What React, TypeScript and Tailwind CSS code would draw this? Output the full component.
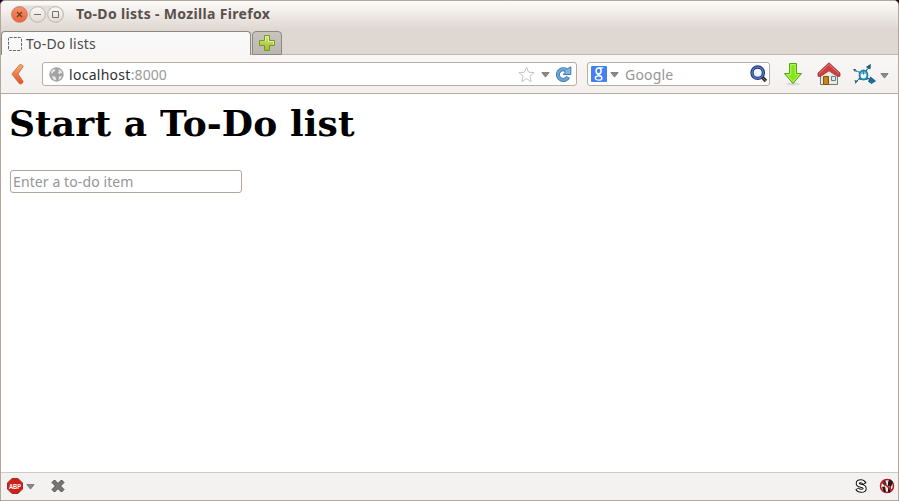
import React from "react";

function Caret({ className = "" }: { className?: string }) {
  return (
    <svg className={`h-[6px] w-[9px] shrink-0 ${className}`} viewBox="0 0 9 6">
      <path d="M.9.6h7.2L4.5 5.1z" fill="#8b8b8b" stroke="#6b6b6b" strokeWidth=".8" />
    </svg>
  );
}

function WindowButtons() {
  return (
    <svg className="h-[20px] w-[56px] shrink-0" viewBox="0 0 56 20">
      <defs>
        <linearGradient id="close" x2="0" y2="1">
          <stop stopColor="#f5926f" />
          <stop offset="1" stopColor="#ec6339" />
        </linearGradient>
        <linearGradient id="knob" x2="0" y2="1">
          <stop stopColor="#fbfaf8" />
          <stop offset="1" stopColor="#e1dad5" />
        </linearGradient>
      </defs>
      <rect x=".5" y=".5" width="54" height="18" rx="9" fill="#e5dfd9" />
      <circle cx="9.5" cy="9.5" r="7.8" fill="url(#close)" stroke="#c9785c" />
      <path d="m7 7 5 5m0-5-5 5" stroke="#74351f" strokeWidth="1.2" />
      <circle cx="27.5" cy="9.5" r="7.8" fill="url(#knob)" stroke="#bdb5ae" />
      <path d="M24 9.5h7" stroke="#777069" />
      <circle cx="45.5" cy="9.5" r="7.8" fill="url(#knob)" stroke="#bdb5ae" />
      <path d="M42.5 6.5h6v6h-6z" fill="none" stroke="#777069" />
    </svg>
  );
}

function TitleBar() {
  return (
    <header className="flex h-[29px] shrink-0 items-start bg-linear-to-b from-[#fcfbf9] to-[#dfd7d1] pl-[9px] pt-[4px]">
      <WindowButtons />
      <h1 className="ml-[10px] whitespace-nowrap text-[14px] font-bold leading-[18px] tracking-[0.33px] text-[#59514b]">
        To-Do lists - Mozilla Firefox
      </h1>
    </header>
  );
}

function TabStrip() {
  return (
    <nav className="flex h-[25px] shrink-0 items-end border-b border-[#c5b8ae] bg-[#dfd7d1]">
      <div className="-mb-px flex h-[24px] w-[250px] shrink-0 items-center rounded-t-[4px] border border-b-0 border-[#8c8782] bg-linear-to-b from-[#fafafa] to-[#f8f7f6] pl-[6px]">
        <svg className="h-[14px] w-[14px] shrink-0" viewBox="0 0 14 14">
          <rect x=".5" y=".5" width="13" height="13" rx="1" fill="none" stroke="#656565" strokeDasharray="3 1.2" />
        </svg>
        <span className="ml-[4px] whitespace-nowrap text-[14px] leading-[20px] tracking-[0.2px] text-[#4b4b4b]">To-Do lists</span>
      </div>
      <button className="-mb-px ml-px flex h-[24px] w-[30px] shrink-0 items-center justify-center rounded-t-[4px] border border-[#8c8782] bg-linear-to-b from-[#cac4c0] to-[#bcb6b1]">
        <svg className="h-[16px] w-[16px]" viewBox="0 0 16 16">
          <defs>
            <linearGradient id="plus" x2="0" y2="1">
              <stop stopColor="#d1e577" />
              <stop offset="1" stopColor="#a1bd2e" />
            </linearGradient>
          </defs>
          <path d="M5.5.5h5v5h5v5h-5v5h-5v-5h-5v-5h5z" fill="url(#plus)" stroke="#6f9c24" />
          <path d="M6.5 6.5v-5h3v5h5v3" fill="none" stroke="#e4f0a1" />
        </svg>
      </button>
    </nav>
  );
}

function Globe() {
  return (
    <svg className="h-[15px] w-[15px] shrink-0" viewBox="0 0 15 15">
      <circle cx="7.5" cy="7.5" r="7.2" fill="#a2a2a2" />
      <path d="M2 4.5 4.5 2l2 .5L6 4 4 5.5 2.5 7zM9 2l3 1.5 1.5 3-2-.5-1 1.5L9 6l1-2zM3 9l3 .5L7.5 12 6 13.5 4 12zM10 9.5l3-.5-1.5 3-2 1z" fill="#e6e6e6" />
    </svg>
  );
}

function AddressField() {
  return (
    <div className="flex h-[24px] w-[535px] shrink-0 items-center rounded-[3px] border border-[#b9aca0] bg-white pl-[6px] pr-[4px]">
      <Globe />
      <span className="ml-[5px] flex whitespace-nowrap pt-[2px] text-[14px] leading-[20px] tracking-[0.28px] text-[#303030]">
        localhost<span className="tracking-[0.1px] text-[#999]">:8000</span>
      </span>
      <svg className="ml-auto h-[17px] w-[17px] shrink-0" viewBox="0 0 17 17">
        <path d="m8.5 1 2 5.2 5.7.4-4.4 3.6 1.5 5.5-4.8-3-4.8 3 1.5-5.5L.8 6.6l5.7-.4z" fill="#fff" stroke="#c4c4c4" strokeLinejoin="round" />
      </svg>
      <Caret className="ml-[6px] translate-y-px" />
      <svg className="ml-[5px] h-[16px] w-[17px] shrink-0" viewBox="0 0 17 16">
        <path d="M13.2 11a5.4 5.4 0 1 1-1.7-6.8" fill="none" stroke="#4378a8" strokeWidth="4" />
        <path d="M15.8.8v7.7H8.2l2.2-2.4L9 4.5l3.6-1.7z" fill="#82b5df" stroke="#4378a8" />
        <path d="M12.8 11.5a5.4 5.4 0 1 1-1.4-7.4" fill="none" stroke="#6ba5d8" strokeWidth="2.5" />
      </svg>
    </div>
  );
}

function SearchField() {
  return (
    <div className="flex h-[24px] w-[183px] shrink-0 items-center rounded-[3px] border border-[#b9aca0] bg-white pl-[3px] pr-px">
      <svg className="h-[16px] w-[16px] shrink-0" viewBox="0 0 16 16">
        <rect width="16" height="16" rx="1" fill="#4280f4" />
        <g fill="none" stroke="#fff">
          <ellipse cx="7.6" cy="5" rx="2.5" ry="2.9" strokeWidth="1.5" />
          <ellipse cx="7.6" cy="12" rx="3.3" ry="2.2" strokeWidth="1.3" />
          <path d="M8 1.9h4.2M6.5 7.7q0 1.3 1.8 1.5l2 1" strokeWidth="1.2" />
        </g>
      </svg>
      <Caret className="ml-[3px] translate-y-px" />
      <span className="ml-[6px] pt-[2px] text-[14px] leading-[20px] tracking-[0.2px] text-[#969696]">Google</span>
      <svg className="ml-auto h-[18px] w-[18px] shrink-0" viewBox="0 0 18 18">
        <path d="m12 12 4 4" stroke="#3a332b" strokeWidth="3.6" />
        <circle cx="7.7" cy="7.7" r="5.7" fill="#edf4fb" stroke="#1c3171" strokeWidth="3.3" />
        <circle cx="7.7" cy="7.7" r="5.7" fill="none" stroke="#5879c4" strokeWidth="1.4" />
        <path d="m13 13 3 3" stroke="#86796a" strokeWidth=".8" />
      </svg>
    </div>
  );
}

function BackArrow() {
  return (
    <svg className="ml-[10px] h-[21px] w-[13px] shrink-0" viewBox="0 0 13 21">
      <defs>
        <linearGradient id="back" x2="0" y2="1">
          <stop stopColor="#f3ad76" />
          <stop offset="1" stopColor="#e2501d" />
        </linearGradient>
      </defs>
      <path d="M8.5.8h2.3l1.4 1.7L7 10l5.2 7.5-1.4 2.3H8.5L.8 10z" fill="url(#back)" stroke="#c5643b" strokeWidth=".8" strokeLinejoin="round" />
    </svg>
  );
}

function Download() {
  return (
    <svg className="ml-[13px] h-[24px] w-[20px] shrink-0" viewBox="0 0 20 24">
      <ellipse cx="10" cy="22" rx="7" ry="1.4" fill="#d8d8d5" />
      <path d="M6.5 1.5h7v10h5L10 21.5l-8.5-10h5z" fill="#84e51c" stroke="#4ca516" strokeLinejoin="round" />
      <path d="M7.7 12.5v-10h4.6v10h4L10 19.8l-6.2-7.3z" fill="none" stroke="#b8fa59" />
    </svg>
  );
}

function Home() {
  return (
    <svg className="ml-[14px] h-[24px] w-[24px] shrink-0" viewBox="0 0 24 24">
      <path d="M3.5 12 12 4l8.5 8v10.5h-17z" fill="#e9e9e5" stroke="#777" />
      <path d="M6.5 14.5h5v8h-5z" fill="#c88516" stroke="#82550d" />
      <path d="M14.5 14.5h4v4h-4z" fill="#dbe8ef" stroke="#667c87" />
      <path d="M12 .8 1 11v3.3h2.7L12 8.8l8.3 5.5H23V11z" fill="#cd4040" stroke="#9a3030" strokeWidth=".8" strokeLinejoin="round" />
      <path d="m2 11.5 10-9 10 9" fill="none" stroke="#e57575" />
    </svg>
  );
}

function Network() {
  return (
    <svg className="ml-[12px] h-[21px] w-[23px] shrink-0" viewBox="0 0 23 21">
      <path d="m7.5 8.5-6-2M7 14l-4 4M13 7l3-4M14 14l5 2" fill="none" stroke="#1c5265" strokeWidth="1.2" strokeDasharray="2.4 .6" />
      <path d="m13.5 3 4-2.5L17 5zM17.5 13l5 4-4 2.5-3-2z" fill="#14759b" stroke="#124457" strokeWidth=".7" />
      <path d="m0 5 3 0-1 3zM1.5 16l3 1-2 3z" fill="#295b69" />
      <ellipse cx="10.5" cy="11" rx="3.9" ry="4.5" fill="#f5fbfd" stroke="#1686b1" strokeWidth="1.9" />
      <path d="M8 9h5M10.5 7v3.5M6.5 15.5h8" fill="none" stroke="#1686b1" />
    </svg>
  );
}

function Toolbar() {
  return (
    <section className="flex h-[39px] shrink-0 items-center border-b border-[#b7a99d] bg-linear-to-b from-[#f8f7f6] to-[#f3f1f0]">
      <BackArrow />
      <div className="ml-[18px] flex gap-[10px]">
        <AddressField />
        <SearchField />
      </div>
      <Download />
      <Home />
      <Network />
      <Caret className="ml-[4px] translate-y-[2px]" />
    </section>
  );
}

function PageContent() {
  return (
    <main className="flex-1 bg-white pl-[8px] pt-[8px]">
      <h2 className="whitespace-nowrap font-['DejaVu_Serif',serif] text-[36px] font-bold leading-[42px] tracking-[0.12px] text-black">
        Start a To-Do list
      </h2>
      <input
        className="ml-px mt-[26px] block h-[23px] w-[232px] rounded-[3px] border border-[#b4a69b] bg-white px-[2px] text-[14px] leading-[20px] tracking-[0.1px] text-black outline-none placeholder:text-[#969696] placeholder:opacity-100"
        placeholder="Enter a to-do item"
      />
    </main>
  );
}

function StatusBar() {
  return (
    <footer className="flex h-[28px] shrink-0 items-center border-t border-[#cdcac7] bg-[#f3f2f1] pb-[2px] pl-[6px] pr-[3px]">
      <svg className="h-[16px] w-[16px] shrink-0 overflow-visible" viewBox="0 0 16 16">
        <path d="M5 .5h6L15.5 5v6L11 15.5H5L.5 11V5z" fill="#d11f18" stroke="#94322a" />
        <text x="2" y="10.8" textLength="12" lengthAdjust="spacingAndGlyphs" fontFamily="Liberation Sans, sans-serif" fontSize="8" fontWeight="700" fill="#fff">ABP</text>
      </svg>
      <Caret className="ml-[3px] translate-y-px" />
      <svg className="ml-[16px] h-[14px] w-[14px] shrink-0" viewBox="0 0 14 14">
        <path d="m3.5 1 3.5 3.5L10.5 1 13 3.5 9.5 7l3.5 3.5-2.5 2.5L7 9.5 3.5 13 1 10.5 4.5 7 1 3.5z" fill="#777" stroke="#484848" strokeLinejoin="round" />
      </svg>
      <svg className="ml-auto h-[14px] w-[14px] shrink-0" viewBox="0 0 14 14">
        <path d="M10.8 4.8Q9.5 2.2 6.8 2.2 3.7 2.2 3.7 4.4 3.7 6 7 6.7q3.7.7 3.7 2.7 0 2.4-3.6 2.4-2.8 0-4.1-2.3" fill="none" stroke="#111" strokeWidth="4" />
        <path d="M10.2 4.2Q9 2.2 6.8 2.2 3.7 2.2 3.7 4.4 3.7 6 7 6.7q3.7.7 3.7 2.7 0 2.4-3.6 2.4-2.5 0-3.7-1.8" fill="none" stroke="#fff" strokeWidth="2" />
      </svg>
      <svg className="ml-[11px] h-[16px] w-[16px] shrink-0" viewBox="0 0 16 16">
        <circle cx="8" cy="8" r="6.5" fill="#f2e8e7" stroke="#bd161c" strokeWidth="1.5" />
        <path d="m3 5 3-3 1.5 4L6 8zM9 4l2-3 3 3-2 5-3-1zM3 9l3-.5 1 5-2 1zM9 10l3-1-1 6-2-1z" fill="#251b1d" />
        <path d="m3.5 3.5 9 9" stroke="#bd161c" strokeWidth="1.6" />
      </svg>
    </footer>
  );
}

export default function App() {
  return (
    <div className="h-[501px] w-[899px] overflow-hidden bg-[#2c001e] font-['Noto_Sans',sans-serif]">
      <div className="flex h-full flex-col overflow-hidden rounded-t-[5px] border border-[#b5a79b] bg-[#f3f2f1]">
        <TitleBar />
        <TabStrip />
        <Toolbar />
        <PageContent />
        <StatusBar />
      </div>
    </div>
  );
}
